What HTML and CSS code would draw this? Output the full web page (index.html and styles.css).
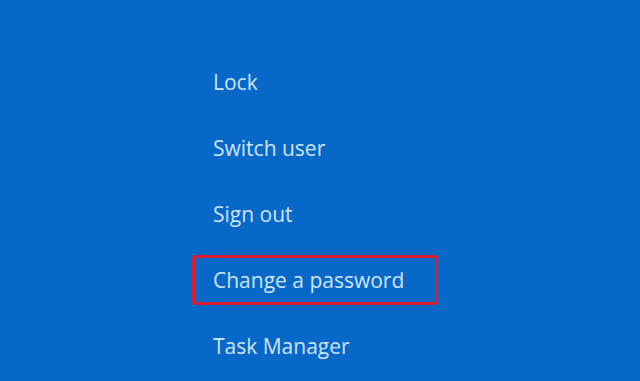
FILE: index.html
```html
<!DOCTYPE html>
<html lang="en">
<head>
<meta charset="utf-8">
<title>Security options</title>
<link rel="stylesheet" href="styles.css">
</head>
<body>
<main class="screen">
  <nav class="menu">
    <div class="item">Lock</div>
    <div class="item">Switch user</div>
    <div class="item">Sign out</div>
    <div class="item item--marked">Change a password</div>
    <div class="item">Task Manager</div>
  </nav>
</main>
</body>
</html>
```
FILE: styles.css
```css
html, body {
  margin: 0;
  padding: 0;
}
body {
  background: #0768c7;
  font-family: "Open Sans", "Noto Sans", "DejaVu Sans", sans-serif;
}
.screen {
  width: 640px;
  height: 381px;
  overflow: hidden;
  padding: 57px 0 0 192px;
  box-sizing: border-box;
}
.menu {
  display: flex;
  flex-direction: column;
  gap: 16px;
}
.item {
  width: 246px;
  height: 50px;
  box-sizing: border-box;
  border: 3px solid transparent;
  border-radius: 4px;
  padding: 0 18px;
  line-height: 44px;
  font-size: 21px;
  color: #cfe4f8;
  white-space: nowrap;
}
.item--marked {
  border-color: #dc1b2c;
}
```
